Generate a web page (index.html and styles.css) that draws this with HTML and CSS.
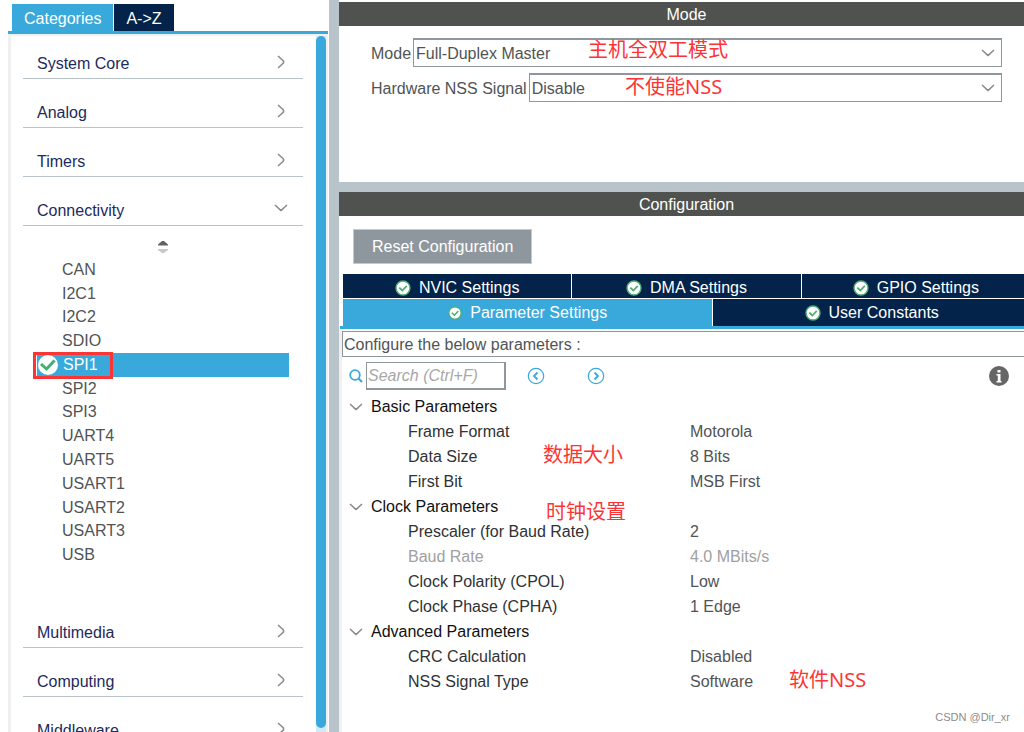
FILE: index.html
```html
<!DOCTYPE html>
<html lang="en">
<head>
    <meta charset="UTF-8">
    <meta name="viewport" content="width=device-width, initial-scale=1.0">
    <title>SPI1 Mode and Configuration</title>
    <link rel="stylesheet" href="styles.css">
</head>
<body>
    <!-- shared icons -->
    <svg class="defs" width="0" height="0">
        <symbol id="right" viewBox="0 0 8 14"><path d="M1 1L6.5 6V8L1 13" fill="none" stroke="#8a8a8a" stroke-width="1.6"/></symbol>
        <symbol id="down" viewBox="0 0 14 8"><path d="M1 1L7 6.5L13 1M4.5 4.5L7 6.5L9.5 4.5" fill="none" stroke="#8a8a8a" stroke-width="1.6"/></symbol>
        <symbol id="check" viewBox="0 0 16 16">
            <circle cx="8" cy="8" r="7" fill="#fff" stroke="#4fae74" stroke-width="1.4"/>
            <path d="M4.3 7.7L7.3 10.5L11.8 5.8" fill="none" stroke="#4fae74" stroke-width="1.8"/>
        </symbol>
    </svg>

    <aside class="sidebar">
        <div class="side-tabs">
            <button class="side-tab active">Categories</button>
            <button class="side-tab">A-&gt;Z</button>
        </div>
        <div class="side-body">
            <nav class="categories">
                <button class="category">System Core <svg width="8" height="14"><use href="#right"/></svg></button>
                <button class="category">Analog <svg width="8" height="14"><use href="#right"/></svg></button>
                <button class="category">Timers <svg width="8" height="14"><use href="#right"/></svg></button>
                <button class="category open">Connectivity <svg width="14" height="8"><use href="#down"/></svg></button>
                <div class="peripherals">
                    <button class="sort" aria-label="Sort">
                        <svg width="10" height="14" viewBox="0 0 10 14"><path d="M0 5.5V4.5L4 1H6L10 4.5V5.5Z" fill="#626262"/><path d="M0 9V10L4 13H6L10 10V9Z" fill="#c9c9c9"/></svg>
                    </button>
                    <ul class="peripheral-list">
                        <li><a href="#">CAN</a></li>
                        <li><a href="#">I2C1</a></li>
                        <li><a href="#">I2C2</a></li>
                        <li><a href="#">SDIO</a></li>
                        <li class="selected">
                            <svg class="status" width="20" height="20" viewBox="0 0 20 20"><circle cx="10" cy="10" r="10" fill="#fff"/><path d="M3 9L8.5 14L16.5 5.5" fill="none" stroke="#45ae71" stroke-width="3"/></svg>
                            <a href="#">SPI1</a>
                        </li>
                        <li><a href="#">SPI2</a></li>
                        <li><a href="#">SPI3</a></li>
                        <li><a href="#">UART4</a></li>
                        <li><a href="#">UART5</a></li>
                        <li><a href="#">USART1</a></li>
                        <li><a href="#">USART2</a></li>
                        <li><a href="#">USART3</a></li>
                        <li><a href="#">USB</a></li>
                    </ul>
                </div>
                <button class="category">Multimedia <svg width="8" height="14"><use href="#right"/></svg></button>
                <button class="category">Computing <svg width="8" height="14"><use href="#right"/></svg></button>
                <button class="category">Middleware <svg width="8" height="14"><use href="#right"/></svg></button>
            </nav>
            <div class="scrollbar"><div class="thumb"></div></div>
        </div>
    </aside>

    <main class="main">
        <section class="mode">
            <h2 class="title">Mode</h2>
            <div class="mode-body">
                <div class="field">
                    <label for="mode">Mode</label>
                    <select id="mode"><option>Full-Duplex Master</option></select>
                </div>
                <div class="field">
                    <label for="nss">Hardware NSS Signal</label>
                    <select id="nss"><option>Disable</option></select>
                </div>
            </div>
        </section>

        <section class="config">
            <h2 class="title">Configuration</h2>
            <button class="reset">Reset Configuration</button>
            <div class="tabs">
                <div class="tab-row">
                    <button class="tab"><svg width="16" height="16"><use href="#check"/></svg>NVIC Settings</button>
                    <button class="tab"><svg width="16" height="16"><use href="#check"/></svg>DMA Settings</button>
                    <button class="tab"><svg width="16" height="16"><use href="#check"/></svg>GPIO Settings</button>
                </div>
                <div class="tab-row bottom">
                    <button class="tab wide active"><svg width="14" height="14"><use href="#check"/></svg>Parameter Settings</button>
                    <button class="tab"><svg width="16" height="16"><use href="#check"/></svg>User Constants</button>
                </div>
            </div>
            <div class="params">
                <p class="hint">Configure the below parameters :</p>
                <div class="toolbar">
                    <label for="search" aria-label="Search">
                        <svg width="14" height="14" viewBox="0 0 14 14" fill="none" stroke="#39a9dc"><circle cx="6" cy="6" r="4.8" stroke-width="1.8"/><path d="M9.5 9.5L13 13" stroke-width="2.2"/></svg>
                    </label>
                    <input id="search" type="text" placeholder="Search (Ctrl+F)">
                    <button class="step" aria-label="Previous">
                        <svg width="18" height="18" viewBox="0 0 18 18" fill="none" stroke="#39a9dc"><circle cx="9" cy="9" r="7.7" stroke-width="1.2"/><path d="M10.5 5.5L7 9L10.5 12.5" stroke-width="1.8"/></svg>
                    </button>
                    <button class="step" aria-label="Next">
                        <svg width="18" height="18" viewBox="0 0 18 18" fill="none" stroke="#39a9dc"><circle cx="9" cy="9" r="7.7" stroke-width="1.2"/><path d="M7.5 5.5L11 9L7.5 12.5" stroke-width="1.8"/></svg>
                    </button>
                    <button class="info" aria-label="Information">
                        <svg width="20" height="20" viewBox="0 0 20 20"><circle cx="10" cy="10" r="10" fill="#666"/><path d="M8.5 4H11.5V6.5H8.5ZM7.5 8H11.5V15H12.5V16.5H7.5V15H8.8V9.5H7.5Z" fill="#fff"/></svg>
                    </button>
                </div>
                <table class="param-table">
                    <tbody>
                        <tr class="group"><th colspan="2"><svg width="14" height="8"><use href="#down"/></svg>Basic Parameters</th></tr>
                        <tr><td>Frame Format</td><td>Motorola</td></tr>
                        <tr><td>Data Size</td><td>8 Bits</td></tr>
                        <tr><td>First Bit</td><td>MSB First</td></tr>
                        <tr class="group"><th colspan="2"><svg width="14" height="8"><use href="#down"/></svg>Clock Parameters</th></tr>
                        <tr><td>Prescaler (for Baud Rate)</td><td>2</td></tr>
                        <tr class="disabled"><td>Baud Rate</td><td>4.0 MBits/s</td></tr>
                        <tr><td>Clock Polarity (CPOL)</td><td>Low</td></tr>
                        <tr><td>Clock Phase (CPHA)</td><td>1 Edge</td></tr>
                        <tr class="group"><th colspan="2"><svg width="14" height="8"><use href="#down"/></svg>Advanced Parameters</th></tr>
                        <tr><td>CRC Calculation</td><td>Disabled</td></tr>
                        <tr><td>NSS Signal Type</td><td>Software</td></tr>
                    </tbody>
                </table>
            </div>
        </section>

        <!-- red notes drawn over the panels -->
        <span class="note note-mode">主机全双工模式</span>
        <span class="note note-nss">不使能NSS</span>
        <span class="note note-size">数据大小</span>
        <span class="note note-clock">时钟设置</span>
        <span class="note note-soft">软件NSS</span>
        <span class="watermark">CSDN @Dir_xr</span>
    </main>
</body>
</html>
```

FILE: styles.css
```css
*,
*::before {
    box-sizing: border-box;
}

body {
    margin: 0;
    height: 100vh;
    display: flex;
    overflow: hidden;
    background-color: #fff;
    color: #505456;
    font-family: "Liberation Sans", Arial, sans-serif;
    font-size: 16px;
    line-height: 20px;
}

button, input, select {
    font: inherit;
    color: inherit;
    border: none;
    border-radius: 0;
    margin: 0;
    padding: 0;
    background: none;
}

svg {
    display: block;
    flex: none;
}

.defs {
    position: absolute;
}

/* Sidebar */
.sidebar {
    flex: none;
    width: 339px;
    display: flex;
    flex-direction: column;
    padding: 4px 1px 0 8px;
    border-right: 10px solid #b8c4ca;
}

.side-tabs {
    display: flex;
    gap: 1px;
    padding-left: 4px;
    border-bottom: 3px solid #39a9dc;
}

.side-tab {
    height: 27px;
    padding: 2px 12px 0;
    background-color: #03234b;
    color: #fff;
}

.side-tab.active {
    background-color: #39a9dc;
}

.side-body {
    flex: 1;
    min-height: 0;
    display: flex;
    justify-content: space-between;
    border: solid #f0f0f0;
    border-width: 2px 2px 0 3px;
}

.categories {
    flex: 1;
    display: flex;
    flex-direction: column;
    margin: 0 13px 0 12px;
    overflow: hidden;
}

.category {
    flex: none;
    height: 49px;
    display: flex;
    align-items: flex-end;
    justify-content: space-between;
    padding: 0 15px 4px 14px;
    border-bottom: 1px solid #b8c4ca;
    color: #1c2a5c;
}

.category:first-child {
    height: 43px;
}

.category svg {
    width: 14px;
    margin-bottom: 5px;
}

.category.open svg {
    margin-bottom: 9px;
}

.peripherals {
    flex: none;
    height: 373px;
}

.sort {
    display: block;
    margin: 0 auto;
    padding: 14px 0 4px;
}

.peripheral-list {
    display: grid;
    grid-template-rows: repeat(13, 1fr);
    height: 309px;
    margin: 0 14px;
    padding: 0;
    list-style: none;
}

.peripheral-list li {
    display: flex;
    align-items: center;
    padding-left: 25px;
}

.peripheral-list a {
    color: inherit;
    text-decoration: none;
}

.peripheral-list .selected {
    position: relative;
    background-color: #39a9dc;
    color: #fff;
    padding-left: 1px;
    gap: 5px;
}

/* red frame round the selected entry */
.selected::before {
    content: "";
    position: absolute;
    left: -4px;
    top: -1px;
    width: 80px;
    height: 27px;
    border: 3px solid #fb3535;
}

.scrollbar {
    width: 10px;
    background-color: #d5e8f5;
    padding-bottom: 4px;
}

.thumb {
    height: 100%;
    border-radius: 5px;
    background-color: #39a9dc;
}

/* Right side */
.main {
    flex: 1;
    min-width: 0;
    position: relative;
    display: flex;
    flex-direction: column;
    overflow: hidden;
}

.title {
    height: 24px;
    margin: 0;
    padding: 1px 0 0 10px;
    background-color: #505250;
    color: #fff;
    font-size: 16px;
    font-weight: normal;
    line-height: 24px;
    text-align: center;
}

.mode {
    flex: none;
    height: 192px;
    padding-top: 2px;
    border-bottom: 10px solid #b8c4ca;
}

.mode-body {
    display: flex;
    flex-direction: column;
    gap: 6px;
    padding: 12px 22px 0 32px;
}

.field {
    display: flex;
    align-items: center;
    gap: 2px;
}

.field label {
    padding-top: 2px;
}

.field select {
    flex: 1;
    height: 29px;
    padding: 1px 2px 0;
    border: 1px solid #8f979e;
    border-top-width: 2px;
    appearance: none;
    background: #fff url("data:image/svg+xml,%3Csvg xmlns='http://www.w3.org/2000/svg' width='14' height='8'%3E%3Cpath d='M1 1L7 6.5L13 1M4.5 4.5L7 6.5L9.5 4.5' fill='none' stroke='%238a8a8a' stroke-width='1.6'/%3E%3C/svg%3E") no-repeat right 6px center;
}

.config {
    flex: 1;
    display: flex;
    flex-direction: column;
}

.reset {
    align-self: flex-start;
    margin: 13px 14px 10px;
    padding: 0 18px;
    height: 35px;
    border: 1px solid #c3cace;
    background-color: #8f979e;
    color: #fff;
}

.tabs {
    margin: 0 -6px 0 1px;
    border-bottom: 3px solid #39a9dc;
}

.tab-row {
    display: flex;
    gap: 1px;
    height: 24px;
    margin: 0 0 1px 3px;
}

.tab-row.bottom {
    height: 27px;
    margin-bottom: 0;
}

.tab {
    flex: 6 1 0;
    display: flex;
    align-items: center;
    justify-content: center;
    gap: 8px;
    padding-top: 4px;
    background-color: #03234b;
    color: #fff;
}

.bottom .tab {
    padding-top: 1px;
}

.tab.wide {
    flex-grow: 7;
}

.tab.active {
    background-color: #39a9dc;
}

.params {
    flex: 1;
    padding-top: 2px;
    border-left: 3px solid #f0f0f0;
}

.hint {
    margin: 0 -1px 0 0;
    padding: 3px 1px 1px;
    border: 1px solid #8f979e;
}

.toolbar {
    display: flex;
    align-items: center;
    padding: 5px 15px 4px 7px;
}

.toolbar input {
    width: 140px;
    height: 28px;
    margin: 0 21px 0 3px;
    padding: 1px 1px 0;
    border: 1px solid #8f979e;
    border-right-width: 2px;
    border-bottom-width: 2px;
}

.toolbar input::placeholder {
    color: #a8a8a8;
    font-style: italic;
}

.step {
    margin-right: 42px;
}

.info {
    margin-left: auto;
}

.param-table {
    width: 100%;
    table-layout: fixed;
    border-collapse: collapse;
}

.param-table th,
.param-table td {
    height: 25px;
    padding: 0;
    text-align: left;
    font-weight: normal;
}

.param-table th {
    color: #111;
}

.param-table th svg {
    display: inline-block;
    margin: 0 8px 0 7px;
    vertical-align: middle;
}

.param-table td:first-child {
    color: #303234;
    padding-left: 66px;
}

.param-table td:last-child {
    padding-left: 7px;
}

.param-table .disabled td {
    color: #a0a0a0;
}

/* Notes */
.note {
    position: absolute;
    color: #fb3535;
    font-family: "Noto Sans", "Noto Sans CJK SC", sans-serif;
    font-size: 20px;
    line-height: 24px;
    white-space: nowrap;
}

.note-mode {
    left: 249px;
    top: 38px;
}

.note-nss {
    left: 286px;
    top: 75px;
}

.note-size {
    left: 204px;
    top: 443px;
}

.note-clock {
    left: 207px;
    top: 500px;
}

.note-soft {
    left: 450px;
    top: 668px;
}

.watermark {
    position: absolute;
    right: 14px;
    bottom: 5px;
    color: #8c8c8c;
    font-size: 11px;
}
```
